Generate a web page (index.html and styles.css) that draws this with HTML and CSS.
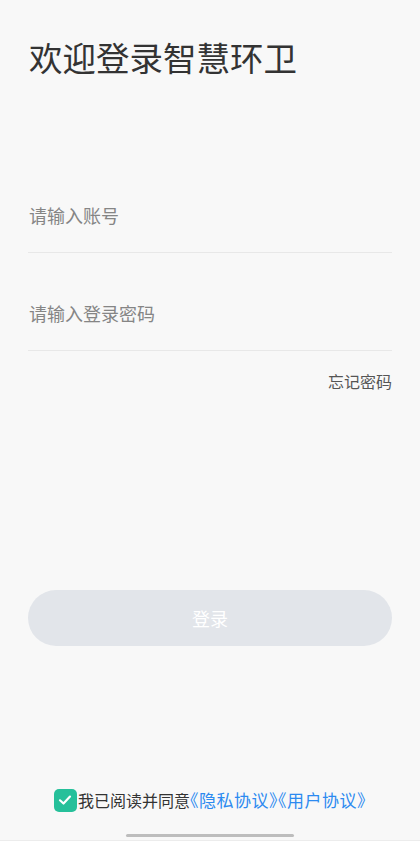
FILE: index.html
```html
<!DOCTYPE html>
<html lang="zh-CN">
<head>
  <meta charset="UTF-8" />
  <meta name="viewport" content="width=device-width, initial-scale=1" />
  <title>登录</title>
  <link rel="stylesheet" href="styles.css">
</head>
<body>
  <div class="page">
    <h1 class="titulo">欢迎登录智慧环卫</h1>

    <form class="form">
      <div class="campo">
        <input type="text" placeholder="请输入账号" />
      </div>
      <div class="campo">
        <input type="password" placeholder="请输入登录密码" />
      </div>
      <div class="esqueci">忘记密码</div>
      <button type="button" class="btn-login">登录</button>
    </form>

    <div class="acordo">
      <span class="check">
        <svg width="16" height="16" viewBox="0 0 16 16"><path d="M3 8.3 L6.5 11.5 L13 4.6" fill="none" stroke="#fff" stroke-width="2.2" stroke-linecap="round" stroke-linejoin="round"/></svg>
      </span>
      <span>我已阅读并同意</span><a href="#">《隐私协议》</a><a href="#">《用户协议》</a>
    </div>

    <div class="home-bar"></div>
  </div>
</body>
</html>
```

FILE: styles.css
```css
* {
  margin: 0;
  padding: 0;
  box-sizing: border-box;
}
body {
  font-family: "Noto Sans CJK SC", "Noto Sans", sans-serif;
  background: #f8f8f8;
  color: #333;
}
.page {
  height: 841px;
  display: flex;
  flex-direction: column;
  padding: 0 28px;
  border-bottom: 1px solid #ececec;
}
.titulo {
  font-size: 33.5px;
  font-weight: 400;
  line-height: 40px;
  margin-top: 37px;
  padding-left: 1px;
  color: #333;
}
.form {
  margin-top: 78px;
}
.campo {
  height: 98px;
  border-bottom: 1px solid #e8e8e8;
  display: flex;
  align-items: flex-end;
  padding-bottom: 25px;
}
.campo input {
  width: 100%;
  height: 24px;
  border: none;
  background: transparent;
  font-family: inherit;
  font-size: 18px;
  color: #333;
  outline: none;
  padding-left: 1px;
}
.campo input::placeholder {
  color: #858585;
}
.esqueci {
  text-align: right;
  font-size: 16px;
  line-height: 24px;
  margin-top: 18px;
  color: #555;
}
.btn-login {
  width: 100%;
  height: 56px;
  margin-top: 197px;
  border: none;
  border-radius: 28px;
  background: #e2e5ea;
  color: #fff;
  font-family: inherit;
  font-size: 18px;
}
.acordo {
  margin-top: auto;
  display: flex;
  align-items: center;
  justify-content: center;
  font-size: 16px;
  line-height: 24px;
  color: #333;
}
.acordo a {
  color: #2c8af0;
  text-decoration: none;
  font-size: 17px;
  letter-spacing: 0.5px;
  font-feature-settings: "halt";
}
.check {
  width: 23px;
  height: 23px;
  border-radius: 5px;
  background: #26c09a;
  display: flex;
  align-items: center;
  justify-content: center;
  margin-right: 1px;
}
.home-bar {
  width: 168px;
  height: 3px;
  border-radius: 2px;
  background: #bdbdbd;
  margin: 22px auto 3px;
}
```
